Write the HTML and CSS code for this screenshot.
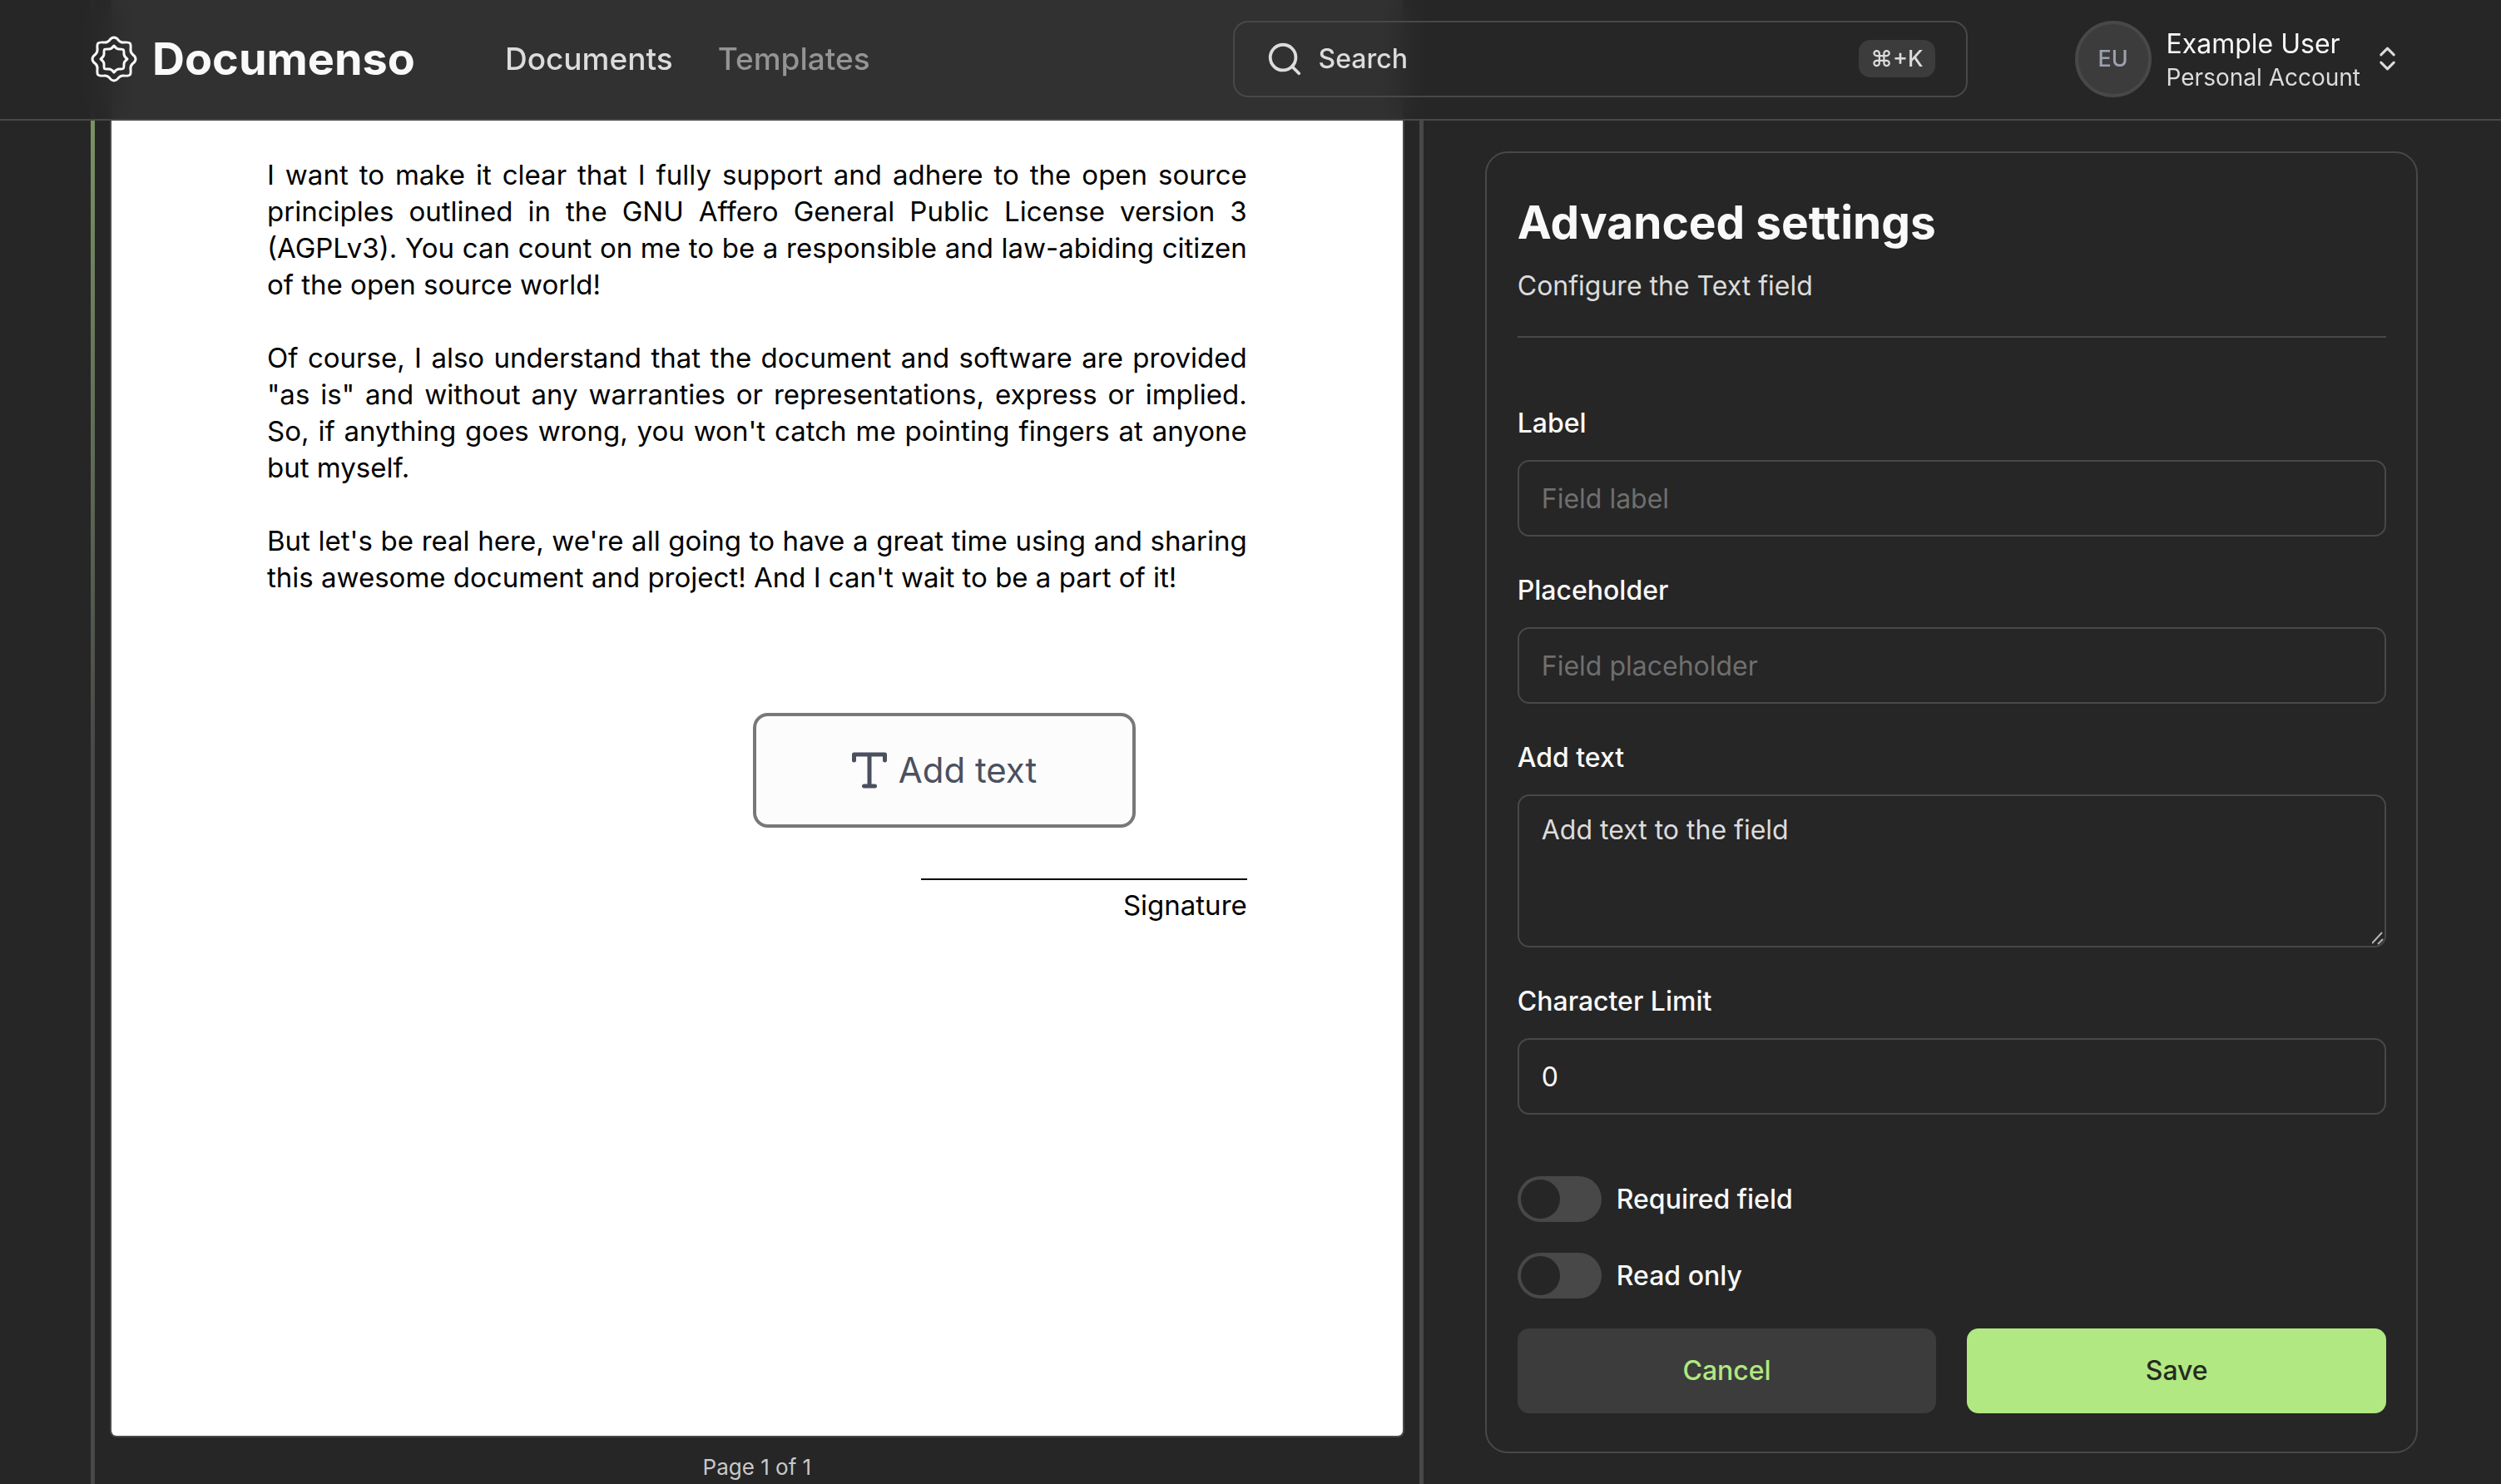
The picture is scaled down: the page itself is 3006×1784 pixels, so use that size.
FILE: index.html
```html
<!DOCTYPE html>
<html lang="en">
<head>
<meta charset="utf-8">
<meta name="viewport" content="width=device-width, initial-scale=1">
<title>Documenso</title>
<link rel="stylesheet" href="styles.css">
</head>
<body>
<header class="header">
  <a class="brand" href="#">
    <svg class="brand-mark" viewBox="0 0 56 56" fill="none" stroke="currentColor" stroke-width="3" stroke-linejoin="round" aria-hidden="true">
      <path d="M28 2Q31 2 33.500 5.500Q36 8.500 40 8Q46 7.500 47 9Q48.500 10 48 16Q47.500 20 50.500 22.500Q54 25 54 28Q54 31 50.500 33.500Q47.500 36 48 40Q48.500 46 47 47Q46 48.500 40 48Q36 47.500 33.500 50.500Q31 54 28 54Q25 54 22.500 50.500Q20 47.500 16 48Q10 48.500 9 47Q7.500 46 8 40Q8.500 36 5.500 33.500Q2 31 2 28Q2 25 5.500 22.500Q8.500 20 8 16Q7.500 10 9 9Q10 7.500 16 8Q20 8.500 22.500 5.500Q25 2 28 2Z"/>
      <path d="M28 12Q31 16 34 16Q39.500 16 39.500 17Q40 17 40 22Q40 25 44 28Q40 31 40 34Q40 39 39 39.500Q39 40 34 40Q31 40 28 44Q25 40 22 40Q17 40 16.500 39.500Q16 39 16 34Q16 31 12 28Q16 25 16 22Q16 17 16.500 16.500Q17 16 22 16Q25 16 28 12Z"/>
    </svg>
    <span class="brand-name">Documenso</span>
  </a>
  <nav class="nav">
    <a class="nav-link nav-link-active" href="#">Documents</a>
    <a class="nav-link" href="#">Templates</a>
  </nav>
  <button class="search" type="button">
    <svg class="search-icon" viewBox="0 0 24 24" fill="none" stroke="currentColor" stroke-width="2" stroke-linecap="round" aria-hidden="true"><circle cx="11" cy="11" r="8"/><path d="m21 21-4.300-4.300"/></svg>
    <span class="search-text">Search</span>
    <kbd class="kbd">⌘+K</kbd>
  </button>
  <button class="account" type="button">
    <span class="avatar">EU</span>
    <span class="account-text">
      <span class="account-name">Example User</span>
      <span class="account-kind">Personal Account</span>
    </span>
    <svg class="account-icon" viewBox="0 0 24 24" fill="none" stroke="currentColor" stroke-width="2" stroke-linecap="round" stroke-linejoin="round" aria-hidden="true"><path d="m7 15 5 5 5-5"/><path d="m7 9 5-5 5 5"/></svg>
  </button>
</header>

<main class="main">
  <section class="viewer">
    <div class="viewer-inner">
      <article class="paper">
        <p class="para">
          <span class="line">I want to make it clear that I fully support and adhere to the open source</span>
          <span class="line">principles outlined in the GNU Affero General Public License version 3</span>
          <span class="line">(AGPLv3). You can count on me to be a responsible and law-abiding citizen</span>
          <span class="line">of the open source world!</span>
        </p>
        <p class="para">
          <span class="line">Of course, I also understand that the document and software are provided</span>
          <span class="line">"as is" and without any warranties or representations, express or implied.</span>
          <span class="line">So, if anything goes wrong, you won't catch me pointing fingers at anyone</span>
          <span class="line">but myself.</span>
        </p>
        <p class="para">
          <span class="line">But let's be real here, we're all going to have a great time using and sharing</span>
          <span class="line">this awesome document and project! And I can't wait to be a part of it!</span>
        </p>
        <p class="signature">Signature</p>
        <button class="placed-field" type="button">
          <svg class="placed-icon" viewBox="0 0 42 44" fill="none" stroke="currentColor" stroke-width="5" stroke-linecap="round" stroke-linejoin="round" aria-hidden="true"><path d="M2.500 10V3H39.500V10M21 3V41M14.500 41H27.500"/></svg>
          <span>Add text</span>
        </button>
      </article>
      <p class="page-count">Page 1 of 1</p>
    </div>
  </section>

  <form class="panel">
    <div class="panel-head">
      <h1 class="panel-title">Advanced settings</h1>
      <p class="panel-sub">Configure the Text field</p>
    </div>
    <div class="fields">
      <div class="field">
        <label class="label" for="field-label">Label</label>
        <input class="input" id="field-label" type="text" placeholder="Field label">
      </div>
      <div class="field">
        <label class="label" for="field-placeholder">Placeholder</label>
        <input class="input" id="field-placeholder" type="text" placeholder="Field placeholder">
      </div>
      <div class="field">
        <label class="label" for="field-text">Add text</label>
        <div class="textarea-wrap">
          <textarea class="input textarea" id="field-text" placeholder="Add text to the field"></textarea>
          <svg class="grip" viewBox="0 0 14 16" fill="none" stroke="#b5b5b5" stroke-width="2" aria-hidden="true"><path d="M0 14 12 1M7 15l6-6"/></svg>
        </div>
      </div>
      <div class="field">
        <label class="label" for="field-limit">Character Limit</label>
        <input class="input" id="field-limit" type="text" inputmode="numeric" value="0">
      </div>
    </div>
    <div class="switches">
      <div class="switch-row">
        <input class="switch" id="required" type="checkbox" role="switch">
        <label class="label" for="required">Required field</label>
      </div>
      <div class="switch-row">
        <input class="switch" id="readonly" type="checkbox" role="switch">
        <label class="label" for="readonly">Read only</label>
      </div>
    </div>
    <div class="actions">
      <button class="button button-secondary" type="button">Cancel</button>
      <button class="button button-primary" type="submit">Save</button>
    </div>
  </form>
</main>
</body>
</html>
```
FILE: styles.css
```css
:root {
  --bg: #262626;
  --border: #484848;
  --muted: #3c3c3c;
  --text: #f9f9f9;
  --text-soft: #dcdcdc;
  --primary: #b1e881;
}

* {
  box-sizing: border-box;
}

body {
  margin: 0;
  height: 100vh;
  overflow: hidden;
  background: var(--bg);
  color: var(--text);
  font-family: Inter, "Noto Sans", sans-serif;
  font-size: 32px;
  line-height: 44px;
}

p,
h1 {
  margin: 0;
}

a {
  color: inherit;
  text-decoration: none;
}

button,
input,
textarea {
  margin: 0;
  font: inherit;
  color: inherit;
}

/* Header */
.header {
  position: sticky;
  top: 0;
  z-index: 2;
  display: flex;
  align-items: center;
  height: 145px;
  padding: 0 118px 2px 109px;
  border-bottom: 2px solid var(--border);
  background: rgba(38, 38, 38, 0.95);
  backdrop-filter: blur(18px);
}

.brand {
  display: flex;
  align-items: center;
  gap: 18px;
}

.brand-mark {
  width: 56px;
  height: 56px;
}

.brand-name {
  font-size: 54px;
  font-weight: 700;
  line-height: 64px;
}

.nav {
  display: flex;
  gap: 54px;
  margin-left: 108px;
  font-size: 37px;
  font-weight: 500;
}

.nav-link {
  color: #949494;
}

.nav-link-active {
  color: var(--text-soft);
}

.search {
  display: flex;
  align-items: center;
  width: 883px;
  height: 92px;
  margin-left: auto;
  padding: 0 37px;
  border: 2px solid var(--border);
  border-radius: 18px;
  background: transparent;
  color: var(--text-soft);
  font-weight: 500;
}

.search-icon {
  width: 46px;
  height: 46px;
  margin-right: 18px;
}

.kbd {
  margin-left: auto;
  padding: 0 14px;
  border-radius: 14px;
  background: var(--muted);
  font-family: inherit;
  font-size: 27px;
  line-height: 45px;
}

.account {
  display: flex;
  align-items: center;
  margin-left: 129px;
  padding: 0;
  border: 0;
  background: none;
  text-align: left;
}

.avatar {
  width: 92px;
  height: 92px;
  border: 4px solid var(--border);
  border-radius: 50%;
  background: var(--muted);
  color: #9ca1af;
  font-size: 27px;
  font-weight: 500;
  line-height: 84px;
  text-align: center;
}

.account-text {
  display: flex;
  flex-direction: column;
  margin: 0 14px 0 18px;
  padding-top: 4px;
  line-height: 40px;
}

.account-kind {
  color: var(--text-soft);
  font-size: 28px;
}

.account-icon {
  width: 37px;
  height: 37px;
  color: var(--text-soft);
}

/* Two columns, scrolled beneath the header */
.main {
  display: grid;
  grid-template-columns: minmax(0, 10fr) minmax(0, 7fr);
  align-items: start;
  gap: 74px;
  margin-top: -145px;
  padding: 0 100px 0 109px;
}

.viewer {
  padding: 0 5px 5px;
  border-radius: 0 0 27px 27px;
  background: linear-gradient(100deg, #84a26a 0, var(--border) 160px);
}

.viewer-inner {
  padding: 0 18px 18px;
  border-radius: 0 0 22px 22px;
  background: var(--bg);
}

.paper {
  position: relative;
  padding: 188px 187px 616px;
  border: 2px solid var(--border);
  border-top: 0;
  border-radius: 0 0 8px 8px;
  background: #fff;
  color: #000;
  font-size: 33px;
}

.para {
  margin-bottom: 44px;
}

.line {
  display: block;
  white-space: nowrap;
  text-align: justify;
  text-align-last: justify;
}

.line:last-child {
  text-align-last: left;
}

.signature {
  width: 392px;
  margin: 340px 0 0 auto;
  padding-top: 8px;
  border-top: 2px solid #000;
  text-align: right;
}

.placed-field {
  position: absolute;
  top: 857px;
  left: 771px;
  display: flex;
  align-items: center;
  justify-content: center;
  gap: 14px;
  width: 460px;
  height: 138px;
  border: 4px solid #787878;
  border-radius: 18px;
  background: #fcfcfc;
  color: #4b5060;
  font-size: 42px;
}

.placed-icon {
  width: 42px;
  height: 44px;
}

.page-count {
  margin-top: 14px;
  color: #c8c8c8;
  font-size: 26px;
  text-align: center;
}

/* Settings panel */
.panel {
  margin-top: 182px;
  padding: 46px 36px 46px 37px;
  border: 2px solid var(--border);
  border-radius: 27px;
}

.panel-head {
  padding-bottom: 38px;
  border-bottom: 2px solid var(--border);
}

.panel-title {
  font-size: 55px;
  font-weight: 700;
  line-height: 74px;
}

.panel-sub {
  margin-top: 18px;
  color: var(--text-soft);
}

.fields {
  display: flex;
  flex-direction: column;
  gap: 43px;
  margin-top: 81px;
}

.label {
  display: block;
  font-weight: 500;
}

.input {
  display: block;
  width: 100%;
  height: 92px;
  margin-top: 22px;
  padding: 0 27px;
  border: 2px solid var(--border);
  border-radius: 14px;
  outline: 0;
  background: transparent;
}

.input::placeholder {
  color: #6f6f6f;
}

.textarea-wrap {
  position: relative;
}

.textarea {
  height: 184px;
  padding-top: 19px;
  resize: none;
}

.textarea::placeholder {
  color: var(--text-soft);
}

.grip {
  position: absolute;
  right: 3px;
  bottom: 3px;
  width: 14px;
  height: 16px;
}

.switches {
  display: flex;
  flex-direction: column;
  gap: 37px;
  margin-top: 74px;
}

.switch-row {
  display: flex;
  align-items: center;
  gap: 18px;
}

.switch {
  appearance: none;
  width: 101px;
  height: 55px;
  padding: 4px;
  border-radius: 28px;
  background: var(--border);
}

.switch::before {
  content: "";
  display: block;
  width: 47px;
  height: 47px;
  border-radius: 50%;
  background: var(--bg);
}

.switch:checked::before {
  margin-left: auto;
}

.actions {
  display: grid;
  grid-template-columns: 1fr 1fr;
  gap: 37px;
  margin-top: 36px;
}

.button {
  height: 102px;
  border: 0;
  border-radius: 14px;
  font-weight: 500;
}

.button-secondary {
  background: var(--muted);
  color: var(--primary);
}

.button-primary {
  background: var(--primary);
  color: #262b20;
}
```
